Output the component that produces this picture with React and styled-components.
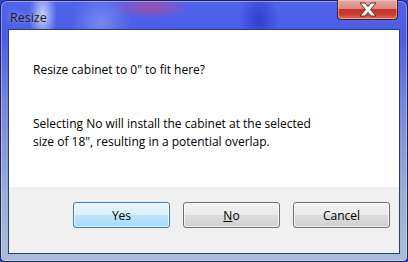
import React from 'react';
import styled, { createGlobalStyle } from 'styled-components';

const GlobalStyle = createGlobalStyle`
  html, body {
    margin: 0;
    padding: 0;
    background: #2a3fd8;
  }
  * {
    box-sizing: border-box;
  }
`;

const CloseIcon = () => (
  <svg width="20" height="15" viewBox="0 0 20 15">
    <path
      d="M2 1 H7 L10 4.6 L13 1 H18 L12.6 7.5 L18 14 H13 L10 10.4 L7 14 H2 L7.4 7.5 Z"
      fill="#ffffff"
      stroke="#5a2a2a"
      strokeWidth="1"
      strokeLinejoin="round"
    />
  </svg>
);

const App = () => {
  return (
    <>
      <GlobalStyle />
      <St.Window>
        <St.TitleBar>
          <St.Title>Resize</St.Title>
          <St.CloseButton aria-label="Close">
            <CloseIcon />
          </St.CloseButton>
        </St.TitleBar>
        <St.Client>
          <St.Message>
            <St.Paragraph>Resize cabinet to 0" to fit here?</St.Paragraph>
            <St.Paragraph>
              Selecting No will install the cabinet at the selected
              <br />
              size of 18", resulting in a potential overlap.
            </St.Paragraph>
          </St.Message>
          <St.Footer>
            <St.Button $default>Yes</St.Button>
            <St.Button>
              <u>N</u>o
            </St.Button>
            <St.Button>Cancel</St.Button>
          </St.Footer>
        </St.Client>
      </St.Window>
    </>
  );
};

export default App;

const St = {
  Window: styled.div`
    display: flex;
    flex-direction: column;

    width: 408px;
    height: 262px;
    padding: 0 7px 7px;

    border: 1px solid #1c2757;
    border-radius: 7px 7px 5px 5px;
    background:
      radial-gradient(ellipse 14px 30px at 42px 14px, rgba(235, 240, 255, 0.75), transparent),
      radial-gradient(ellipse 40px 12px at 150px 6px, rgba(220, 60, 120, 0.55), transparent),
      radial-gradient(ellipse 30px 30px at 100px 22px, rgba(200, 210, 255, 0.35), transparent),
      radial-gradient(ellipse 20px 30px at 258px 18px, rgba(30, 40, 190, 0.6), transparent),
      linear-gradient(180deg, #5263ea 0%, #4a5ce6 14%, #7788dc 40%, #9aaed6 75%, #a9bdd9 100%);
    box-shadow: inset 0 0 0 1px rgba(255, 255, 255, 0.35);
    font-family: 'Segoe UI', 'Open Sans', sans-serif;
  `,
  TitleBar: styled.div`
    display: flex;
    flex-direction: row;
    justify-content: space-between;
    align-items: flex-start;

    height: 29px;
  `,
  Title: styled.div`
    padding: 8px 0 0 2px;

    color: #1a1a1a;
    font-size: 12.5px;
    text-shadow: 0 0 6px rgba(255, 255, 255, 0.6);
  `,
  CloseButton: styled.div`
    display: flex;
    align-items: center;
    justify-content: center;

    width: 61px;
    height: 20px;
    margin: -1px 2px 0 0;

    border: 1px solid #4b1c22;
    border-top: none;
    border-radius: 0 0 4px 4px;
    background: linear-gradient(
      180deg,
      #e8aaa6 0%,
      #d98680 45%,
      #c2342c 50%,
      #c93a30 75%,
      #e0725e 100%
    );
    box-shadow: inset 0 0 0 1px rgba(255, 220, 220, 0.45);
  `,
  Client: styled.div`
    display: flex;
    flex-direction: column;
    flex: 1;

    border: 1px solid #2e3c66;
  `,
  Message: styled.div`
    flex: 1;
    padding: 31px 24px 0;

    background: #ffffff;
    color: #000000;
    font-size: 12px;
    line-height: 18px;
  `,
  Paragraph: styled.p`
    margin: 0 0 36px;
  `,
  Footer: styled.div`
    display: flex;
    flex-direction: row;
    justify-content: flex-end;
    gap: 13px;

    height: 66px;
    padding: 15px 9px 0 0;

    background: #f0f0f0;
  `,
  Button: styled.div`
    display: flex;
    align-items: center;
    justify-content: center;

    width: 97px;
    height: 26px;

    border: 1px solid ${({ $default }) => ($default ? '#3c7fb1' : '#707070')};
    border-radius: 3px;
    background: ${({ $default }) =>
      $default
        ? 'linear-gradient(180deg, #eaf6fd 0%, #d9f0fc 49%, #bee6fd 50%, #a7d9f5 100%)'
        : 'linear-gradient(180deg, #f2f2f2 0%, #ebebeb 49%, #dddddd 50%, #cfcfcf 100%)'};
    box-shadow: inset 0 0 0 1px rgba(255, 255, 255, 0.7);
    color: #000000;
    font-size: 12px;
  `,
};
